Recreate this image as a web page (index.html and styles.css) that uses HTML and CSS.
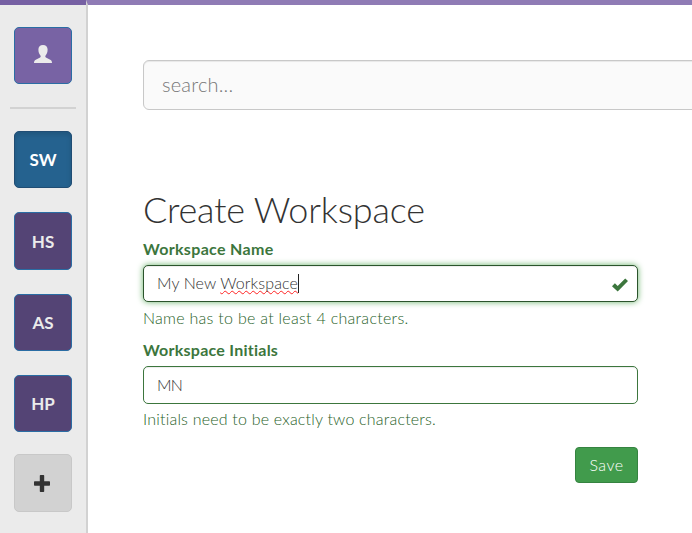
FILE: index.html
```html
<!DOCTYPE html>
<html lang="en">
<head>
<meta charset="utf-8">
<title>Create Workspace</title>
<link rel="stylesheet" href="styles.css">
</head>
<body>
<div class="app">
  <nav class="sidebar">
    <a class="tile tile-user">
      <svg width="18" height="18" viewBox="0 0 18 18"><path d="M9 0C6 0 4.400 1.800 4.400 4.600c0 2.700.8 4.600 2 5.900.5.600.4 1.500-.3 1.900L1.800 14.700C.5 15.400 0 16.300 0 18h18c0-1.700-.5-2.600-1.800-3.300l-4.300-2.300c-.7-.4-.8-1.300-.3-1.900 1.200-1.300 2-3.200 2-5.900C13.600 1.800 12 0 9 0z"/></svg>
    </a>
    <hr class="divider">
    <a class="tile tile-active">SW</a>
    <a class="tile tile-tall">HS</a>
    <a class="tile">AS</a>
    <a class="tile">HP</a>
    <a class="tile tile-add">
      <svg width="16" height="17" viewBox="0 0 16 17"><path d="M6.500 0h3q.7 0 .7.700v5.600h5.100q.7 0 .7.700v3q0 .7-.7.700h-5.100v5.600q0 .7-.7.700h-3q-.7 0-.7-.7v-5.600H.7q-.7 0-.7-.7V7q0-.7.700-.7h5.100V.7q0-.7.700-.7z"/></svg>
    </a>
  </nav>
  <main class="content">
    <div class="search">search...</div>
    <form class="form">
      <h2>Create Workspace</h2>
      <label class="label-name">Workspace Name</label>
      <div class="field field-focus">
        <span class="value">My New <span class="misspelled">Workspace</span></span><i class="caret"></i>
        <svg class="check" width="16" height="14" viewBox="0 0 16 14"><path d="M0 8.200 2.900 5.300 5.700 8 13.200.4 16 3.100 5.700 13.500z"/></svg>
      </div>
      <p class="help help-name">Name has to be at least 4 characters.</p>
      <label class="label-initials">Workspace Initials</label>
      <div class="field field-initials"><span class="value">MN</span></div>
      <p class="help help-initials">Initials need to be exactly two characters.</p>
      <button type="button" class="save">Save</button>
    </form>
  </main>
</div>
</body>
</html>
```

FILE: styles.css
```css
* { box-sizing: border-box; }
body {
  margin: 0;
  font-family: Lato, "Open Sans", sans-serif;
  font-size: 16px;
  font-variant-ligatures: none;
  color: #333;
  background: #fff;
}
.app { display: flex; height: 533px; overflow: hidden; }
.sidebar {
  flex: none;
  width: 86px;
  padding: 22px 14px 0;
  background: #ebebeb;
  border-top: 5px solid #7660a3;
}
.tile {
  display: flex;
  align-items: center;
  justify-content: center;
  width: 58px;
  height: 57px;
  margin-bottom: 24px;
  border: 1px solid #2a6da4;
  border-radius: 5px;
  background: #544475;
  color: #ebebeb;
  font-size: 17px;
  font-weight: 700;
}
.tile svg { fill: currentColor; }
.tile-user { margin-bottom: 23px; background: #7863a4; }
.tile-user svg { margin-bottom: 3px; }
.tile-active {
  background: #25628f;
  border-color: #204d74;
  color: #fff;
  box-shadow: inset 0 3px 5px rgba(0, 0, 0, .125);
}
.tile-tall { height: 58px; }
.tile-add {
  height: 58px;
  margin-top: -2px;
  margin-bottom: 0;
  padding-right: 2px;
  background: #d2d2d2;
  border-color: #c8c8c8;
  color: #333;
}
.divider {
  height: 2px;
  margin: 0 -4px 22px;
  border: 0;
  background: #d2d2d2;
}
.content {
  flex: 1;
  min-width: 0;
  padding: 55px 0 0 55px;
  border-top: 5px solid #8f7bb5;
  border-left: 2px solid #d2d2d2;
}
.search {
  width: 600px;
  height: 50px;
  padding-left: 18px;
  border: 1px solid #c8c8c8;
  border-radius: 6px;
  background: #fafafa;
  box-shadow: inset 0 1px 1px rgba(0, 0, 0, .075);
  color: #777;
  font-size: 20px;
  font-weight: 300;
  line-height: 46px;
  letter-spacing: .2px;
}
.form {
  display: flex;
  flex-direction: column;
  width: 495px;
  margin-top: 80px;
}
h2 {
  margin: 0;
  height: 49px;
  font-size: 36px;
  font-weight: 300;
  line-height: 38px;
  letter-spacing: -.18px;
  white-space: nowrap;
}
label {
  height: 26px;
  color: #3c763d;
  font-size: 16px;
  font-weight: 700;
  line-height: 20px;
  letter-spacing: .33px;
}
.label-initials { letter-spacing: .25px; }
.field {
  display: flex;
  align-items: center;
  height: 37px;
  padding: 0 9px 0 13px;
  border: 1px solid #3c763d;
  border-radius: 5px;
  background: #fff;
  box-shadow: inset 0 1px 1px rgba(0, 0, 0, .075);
  color: #333;
  font-weight: 300;
}
.value { margin-top: -2px; letter-spacing: .12px; }
.field-focus {
  border-color: #2b542c;
  box-shadow: inset 0 1px 1px rgba(0, 0, 0, .075), 0 0 6px #67b168;
}
.field-initials { height: 38px; }
.field-initials .value { letter-spacing: -.8px; }
.misspelled {
  text-decoration: underline wavy #f22 1px;
  text-decoration-skip-ink: none;
}
.caret { width: 1px; height: 19px; background: #222; }
.check { margin-left: auto; margin-top: 3px; fill: #3c763d; }
.help {
  height: 38px;
  margin: 0;
  padding-top: 6px;
  color: #1f6128;
  font-weight: 300;
  line-height: 20px;
  letter-spacing: .28px;
  white-space: nowrap;
}
.help-initials { height: 43px; padding-top: 5px; letter-spacing: .2px; }
.save {
  align-self: flex-end;
  width: 63px;
  height: 36px;
  padding: 0 0 2px;
  border: 1px solid #358340;
  border-radius: 4px;
  background: #419b4c;
  color: #fff;
  font: 300 16px Lato, sans-serif;
  letter-spacing: .5px;
}
```
